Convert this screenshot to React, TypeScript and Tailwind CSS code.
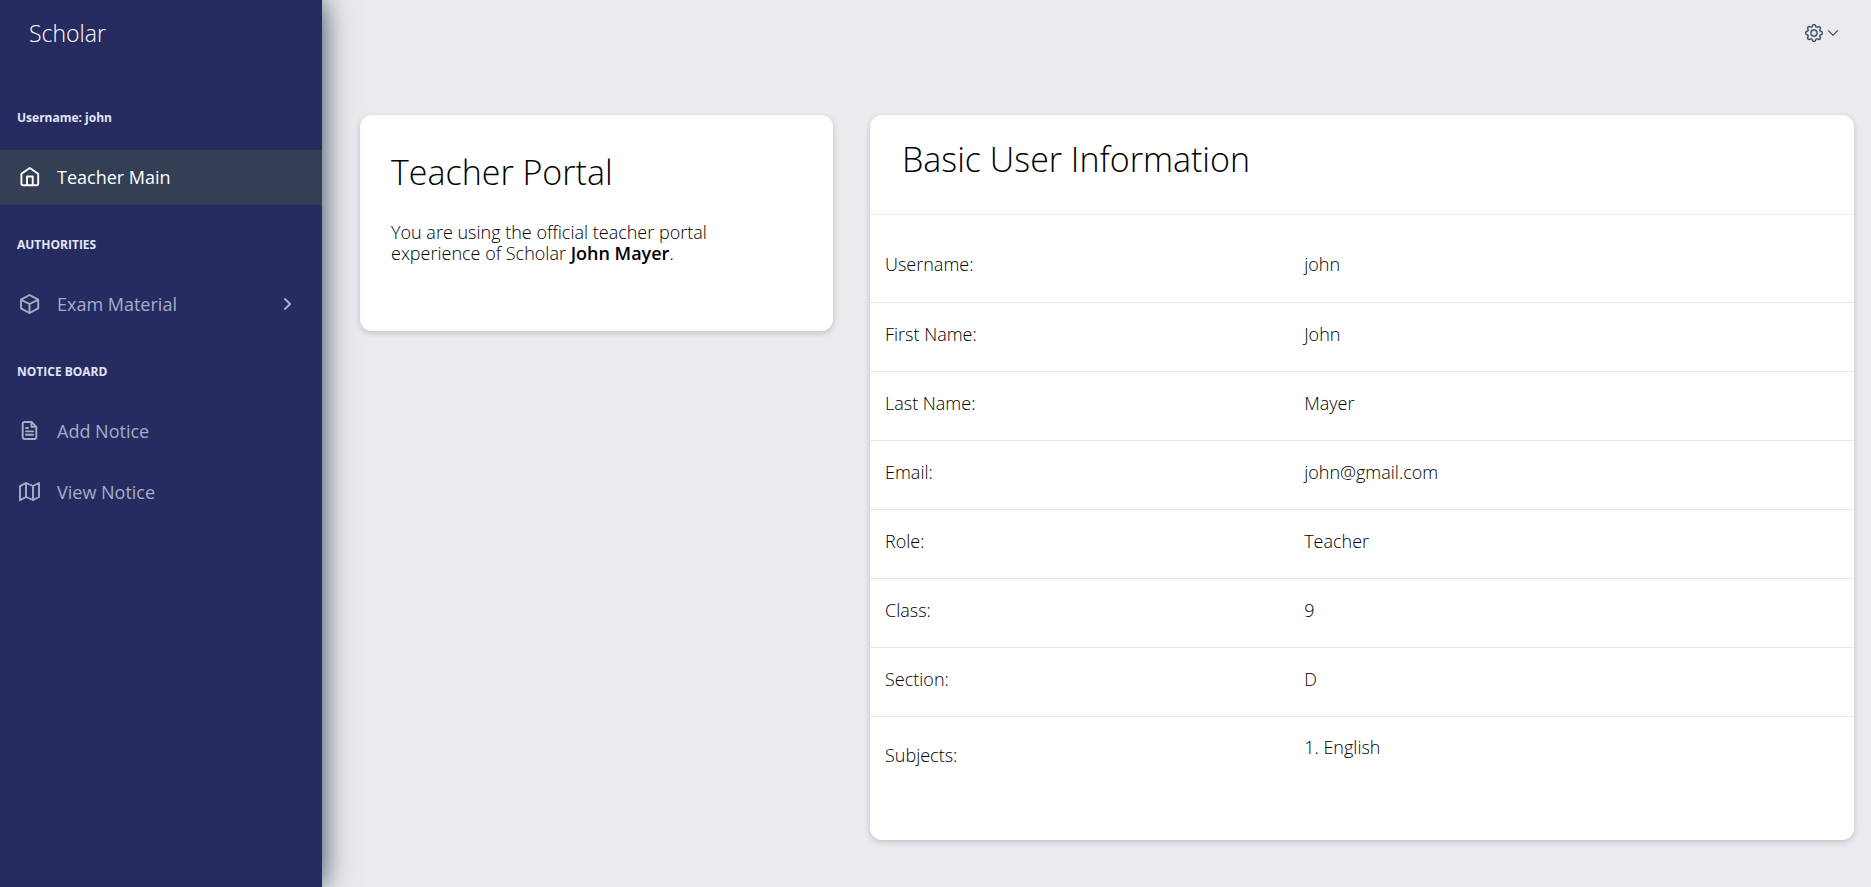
import type { ReactNode } from 'react';
import { BsGear, BsChevronDown } from 'react-icons/bs';

function Glyph({ children }: { children: ReactNode }) {
  return (
    <svg
      viewBox="0 0 24 24"
      className="size-6 shrink-0"
      fill="none"
      stroke="currentColor"
      strokeWidth="1.9"
      strokeLinecap="round"
      strokeLinejoin="round"
      aria-hidden="true"
    >
      {children}
    </svg>
  );
}

const HomeIcon = () => (
  <Glyph>
    <path d="M3.400 8.800 11.800 3l8.400 5.800v9.600a1.800 1.800 0 0 1-1.800 1.800H5.200a1.800 1.800 0 0 1-1.800-1.800V8.800Z" />
    <path d="M9 20v-8.500h5.700V20" />
  </Glyph>
);

const CubeIcon = () => (
  <Glyph>
    <path d="M3 7.600 11.500 3 20.200 7.600v8.800L11.500 21 3 16.400V7.600Z" />
    <path d="M3.200 7.800 11.500 12l8.500-4.200M11.500 12v8.800" />
  </Glyph>
);

const FileIcon = () => (
  <Glyph>
    <path d="M13.500 3H6.400A1.700 1.700 0 0 0 4.700 4.700v13.600A1.700 1.700 0 0 0 6.400 20h10.200a1.700 1.700 0 0 0 1.700-1.700V7.800L13.500 3Z" />
    <path d="M13.400 3.200v4.600h4.700M8 9h2M8 12.400h7M8 15.800h7" />
  </Glyph>
);

const MapIcon = () => (
  <Glyph>
    <path d="M2 6.200 8 3l7 3 6-3v14l-6 3-7-3-6 3.200V6.200Z" />
    <path d="M8 3.200V17M15 6.200V20" />
  </Glyph>
);

function NavItem({
  icon,
  label,
  active = false,
  expandable = false,
}: {
  icon: ReactNode;
  label: string;
  active?: boolean;
  expandable?: boolean;
}) {
  return (
    <a
      href="#"
      className={`flex h-[55px] items-center pr-5 pb-0.5 pl-[18px] text-lg ${
        active ? 'bg-[#343f55] text-white' : 'text-[#a3aec9]'
      }`}
    >
      {icon}
      <span className="ml-[15px] grow">{label}</span>
      {expandable && (
        <Glyph>
          <path d="m7 7 5 5-5 5" />
        </Glyph>
      )}
    </a>
  );
}

function NavHeading({ children }: { children: ReactNode }) {
  return <h2 className="px-[17px] text-xs leading-5 font-bold text-[#e2e6f2]">{children}</h2>;
}

const rows = [
  ['Username:', 'john'],
  ['First Name:', 'John'],
  ['Last Name:', 'Mayer'],
  ['Email:', 'john@gmail.com'],
  ['Role:', 'Teacher'],
  ['Class:', '9'],
  ['Section:', 'D'],
];

export default function App() {
  return (
    <div className="flex min-h-screen bg-[#e9ebee] font-['Open_Sans',sans-serif] text-black">
      <aside className="z-10 w-[322px] shrink-0 bg-[#262c60] shadow-[0_0_28px_rgba(30,45,70,0.9)]">
        <div className="flex h-[66px] items-center px-[29px] text-[23px] font-light text-white">
          Scholar
        </div>
        <nav className="pt-[42px]">
          <NavHeading>Username: john</NavHeading>
          <div className="pt-[22px] pb-[30px]">
            <NavItem icon={<HomeIcon />} label="Teacher Main" active />
          </div>
          <NavHeading>AUTHORITIES</NavHeading>
          <div className="pt-[22px] pb-[30px]">
            <NavItem icon={<CubeIcon />} label="Exam Material" expandable />
          </div>
          <NavHeading>NOTICE BOARD</NavHeading>
          <div className="flex flex-col gap-1.5 pt-[22px]">
            <NavItem icon={<FileIcon />} label="Add Notice" />
            <NavItem icon={<MapIcon />} label="View Notice" />
          </div>
        </nav>
      </aside>

      <div className="min-w-0 grow">
        <header className="flex h-[66px] items-center justify-end pr-8">
          <button
            type="button"
            aria-label="Settings"
            className="flex items-center gap-1 text-[#3c4b64]"
          >
            <BsGear className="size-[18px]" strokeWidth={0.3} />
            <BsChevronDown className="size-3" strokeWidth={0.8} />
          </button>
        </header>

        <main className="grid grid-cols-[473fr_984fr] items-start gap-[37px] pt-[49px] pr-[17px] pb-[45px] pl-[38px]">
          <section className="h-[216px] rounded-xl bg-white px-[31px] pt-[35px] shadow-[0_2px_6px_rgba(0,0,0,0.18)]">
            <h1 className="text-[34px] leading-[44px] font-light">Teacher Portal</h1>
            <p className="mt-7 max-w-[340px] text-lg leading-[21px] font-light">
              You are using the official teacher portal experience of Scholar{' '}
              <strong className="font-semibold">John Mayer</strong>.
            </p>
          </section>

          <section className="rounded-xl bg-white pb-10 shadow-[0_2px_6px_rgba(0,0,0,0.18)]">
            <h2 className="h-[100px] border-b border-[#ededf0] px-8 pt-[22px] text-[34px] leading-[44px] font-light">
              Basic User Information
            </h2>
            <table className="mt-[18px] w-full table-fixed border-collapse text-left text-lg leading-7 font-light">
              <colgroup>
                <col className="w-[42.6%]" />
                <col />
              </colgroup>
              <tbody>
                {rows.map(([label, value]) => (
                  <tr key={label} className="h-[69px] border-b border-[#e8e8ea]">
                    <th scope="row" className="px-[15px] pb-1.5 font-light">
                      {label}
                    </th>
                    <td className="px-[15px] pb-1.5">{value}</td>
                  </tr>
                ))}
                <tr className="h-[84px]">
                  <th scope="row" className="px-[15px] pb-1.5 font-light">
                    Subjects:
                  </th>
                  <td className="px-[15px] pb-[22px]">1. English</td>
                </tr>
              </tbody>
            </table>
          </section>
        </main>
      </div>
    </div>
  );
}
